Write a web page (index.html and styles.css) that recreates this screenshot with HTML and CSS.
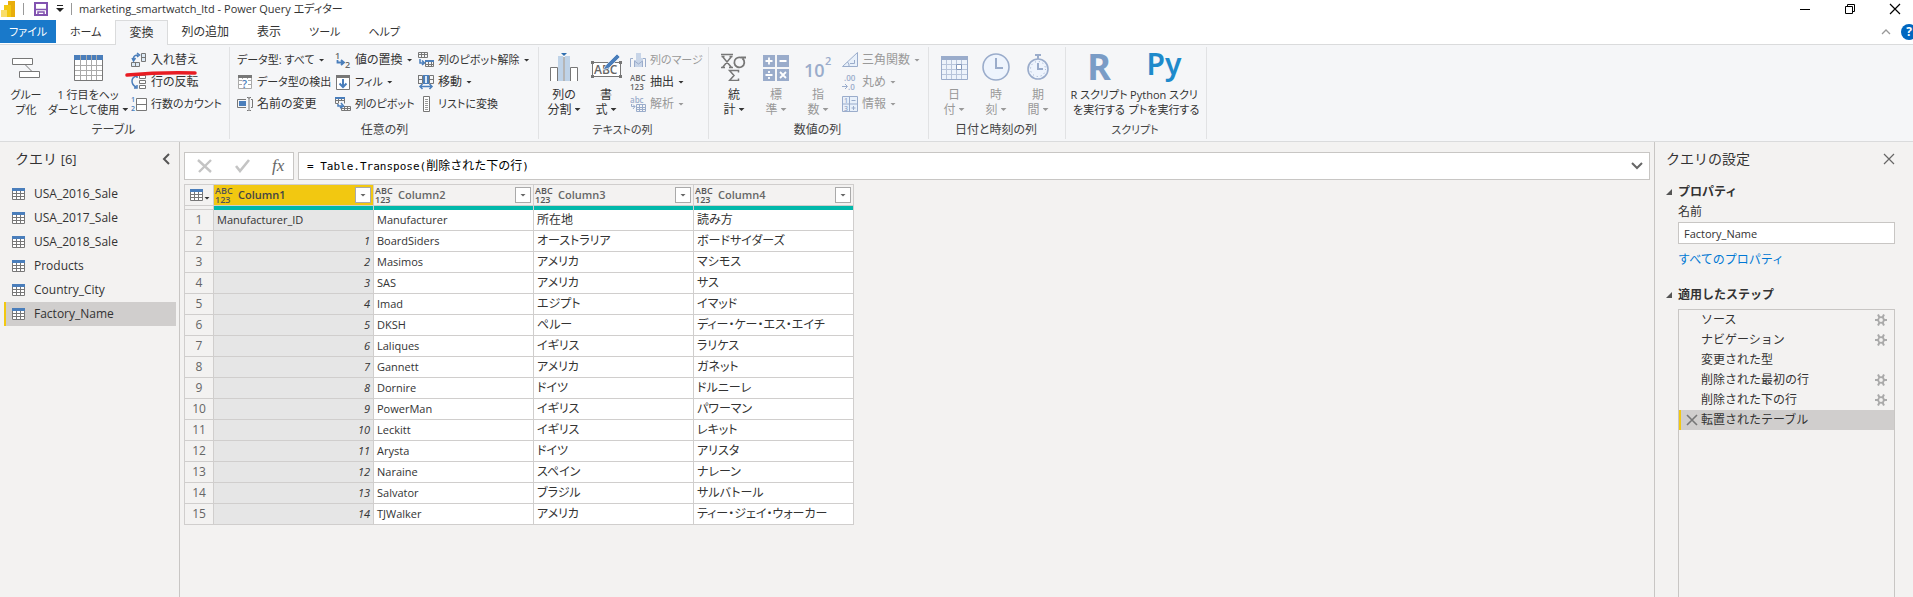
FILE: index.html
```html
<!DOCTYPE html>
<html lang="ja">
<head>
<meta charset="utf-8">
<title>marketing_smartwatch_ltd - Power Query エディター</title>
<link rel="stylesheet" href="styles.css">
</head>
<body>
<svg class="defs" aria-hidden="true">
  <symbol id="i-table" viewBox="0 0 13 12"><path fill="#fff" d="M0 0h13v12H0z"/><path d="M.5 3v8.500h12V3M4.500 3v8M8.500 3v8M1 5.500h11M1 8.500h11" fill="none" stroke="#777"/><path fill="#4a7ebb" d="M0 0h13v3H0z"/></symbol>
  <symbol id="i-gear" viewBox="0 0 12 12"><circle cx="6" cy="6" r="2.800" fill="none" stroke="#aaa" stroke-width="1.800"/><path d="M0 6h3M9 6h3M3 .5l1.500 3M9 .5l-1.500 3M3 11.500l1.500-3M9 11.500l-1.500-3" stroke="#aaa" stroke-width="2"/></symbol>
</svg>

<header class="titlebar">
  <svg class="logo" width="16" height="16" viewBox="0 0 16 16"><path fill="#e8ad0c" d="M8 0h7v16H8z"/><path fill="#f2c811" d="M4 4h7v12H4z"/><path fill="#f9dd6a" d="M1 9h6v7H1z"/></svg>
  <span class="tsep"></span>
  <button class="bare" aria-label="保存"><svg width="14" height="14" viewBox="0 0 14 14"><path d="M1 1h12v12H1z" fill="#fff" stroke="#8253b0" stroke-width="2"/><path d="M1 7.500h12" stroke="#8253b0" stroke-width="1.500"/><path d="M4 14v-4h6v4" fill="none" stroke="#8253b0" stroke-width="1.500"/></svg></button>
  <button class="bare qat" aria-label="クイック アクセス"><svg width="8" height="7" viewBox="0 0 8 7"><path d="M1 .5h6" stroke="#222"/><path d="M0 3h8L4 7z" fill="#222"/></svg></button>
  <span class="tsep"></span>
  <h1 class="title">marketing_smartwatch_ltd - Power Query エディター</h1>
  <div class="wincontrols">
    <button class="bare" aria-label="最小化"><svg width="12" height="12" viewBox="0 0 12 12"><path d="M1 6.500h10" stroke="#000"/></svg></button>
    <button class="bare" aria-label="元に戻す"><svg width="12" height="12" viewBox="0 0 12 12"><path d="M1.500 3.500h7v7h-7zM3.500 3V1.500h7v7H9" fill="none" stroke="#000"/></svg></button>
    <button class="bare" aria-label="閉じる"><svg width="12" height="12" viewBox="0 0 12 12"><path d="M1 1l10 10M11 1L1 11" stroke="#000" stroke-width="1.200"/></svg></button>
  </div>
</header>

<nav class="tabs">
  <button class="tab tight file">ファイル</button>
  <button class="tab tight">ホーム</button>
  <button class="tab active">変換</button>
  <button class="tab">列の追加</button>
  <button class="tab">表示</button>
  <button class="tab tight">ツール</button>
  <button class="tab tight">ヘルプ</button>
  <div class="tabtools">
    <button class="bare" aria-label="リボンを折りたたむ"><svg width="10" height="6" viewBox="0 0 10 6"><path d="M1 5l4-4 4 4" fill="none" stroke="#999" stroke-width="1.300"/></svg></button>
    <button class="help" aria-label="ヘルプを開く">?</button>
  </div>
</nav>

<div class="ribbon">
  <section class="group">
    <div class="items">
      <button class="big w44 tight"><svg width="28" height="28" viewBox="0 0 28 28"><path d="M.5 5.500h20v6H.5zM7.500 18.500h20v6h-20zM13.500 12l6 6" fill="#fff" stroke="#777"/></svg><span>グルー<br>プ化</span></button>
      <button class="big w80 tight"><svg width="29" height="28" viewBox="0 0 29 28"><path d="M.5 2.500h28v25H.5z" fill="#fff" stroke="#777"/><path d="M0 2h29v5H0z" fill="#4a7ebb"/><path d="M6.500 2v25M12.500 2v25M17.500 2v25M22.500 2v25M1 12.500h27M1 17.500h27M1 22.500h27" stroke="#aaa"/></svg><span>1 行目をヘッ<br>ダーとして使用<i class="arr"></i></span></button>
      <div class="stack c92">
        <button class="small"><svg width="16" height="16" viewBox="0 0 16 16"><path d="M10.500 1.500h4v8h-4zM10.500 5.500h4M.5 10.500h8v4h-8zM4.500 10.500v4" fill="#dce9f5" stroke="#777"/><path d="M2.500 8V6Q3 3 7 3M1 6l1.500 3L4.500 6M6 1l2.500 2L6 5" fill="none" stroke="#4a7ebb" stroke-width="1.500"/></svg>入れ替え</button>
        <button class="small"><svg width="16" height="16" viewBox="0 0 16 16"><path d="M8.500 1.500h6v3h-6zM8.500 6.500h6v3h-6zM8.500 11.500h6v3h-6z" fill="#fff" stroke="#777"/><path d="M6 2Q1 3 1 7t4 6M3 14h3v-3M3.500 1H6v3" fill="none" stroke="#4a7ebb" stroke-width="1.500"/></svg>行の反転</button>
        <button class="small tight"><svg width="16" height="16" viewBox="0 0 16 16"><path d="M5.500 2.500h10v12h-10zM5.500 8.500h10" fill="#fff" stroke="#777"/><text x="0" y="6" class="t7 blue">1</text><text x="0" y="15" class="t7 blue">2</text></svg>行数のカウント</button>
      </div>
      <svg class="mark" width="72" height="6" viewBox="0 0 72 6"><path d="M2 4Q36 1 70 2" fill="none" stroke="#e81c23" stroke-width="3.500" stroke-linecap="round"/></svg>
    </div>
    <h2 class="gname">テーブル</h2>
  </section>

  <section class="group wide">
    <div class="items">
      <div class="stack c98">
        <button class="small tight">データ型: すべて<i class="arr"></i></button>
        <button class="small tight"><svg width="16" height="16" viewBox="0 0 16 16"><path d="M1.500 1.500h13v13h-13zM5.500 3v11M10.500 3v11M1 6.500h13M1 10.500h13" fill="#fff" stroke="#aaa"/><path d="M1 1h14v3H1z" fill="#777"/><path fill="#fff" d="M5 5h6v9H5z"/><text x="5" y="14" class="t11 blue">?</text></svg>データ型の検出</button>
        <button class="small"><svg width="16" height="16" viewBox="0 0 16 16"><path d="M9 3.500H.5v8H9M14 3.500h1.500v8H14M10 1.500h1.500l.5 1 .5-1H14M10 14.500h1.500l.5-1 .5 1H14M12 2v11" fill="none" stroke="#777"/><path fill="#4a7ebb" d="M2 5h7v5H2z"/></svg>名前の変更</button>
      </div>
      <div class="stack c83">
        <button class="small"><svg width="16" height="16" viewBox="0 0 16 16"><text x="0" y="7" class="t9">1</text><text x="10" y="16" class="t9">2</text><path d="M2.500 8v2.500H8M6 8l3 2.500L6 13" fill="none" stroke="#4a7ebb" stroke-width="1.800"/></svg>値の置換<i class="arr"></i></button>
        <button class="small tight"><svg width="16" height="16" viewBox="0 0 16 16"><path d="M1.500 1.500h13v14h-13z" fill="#fff" stroke="#777"/><path d="M1 1h14v3H1z" fill="#777"/><path d="M8 5v8M4.500 9.500L8 13l3.500-3.500" fill="none" stroke="#4a7ebb" stroke-width="2"/></svg>フィル<i class="arr"></i></button>
        <button class="small tight"><svg width="16" height="16" viewBox="0 0 16 16"><path d="M.5 1.500h9v6M.5 1.500v6h3M3.500 2v5M6.500 2v3M1 4.500h8M6.500 10.500h9v4h-9zM9.500 11v3M12.500 11v3M7 12.500h8" fill="none" stroke="#777"/><path d="M0 1h10v2H0z" fill="#4a7ebb"/><path d="M3 8v2h4M6 7l2.500 3L5 12" fill="none" stroke="#4a7ebb" stroke-width="1.500"/></svg>列のピボット</button>
      </div>
      <div class="stack c114">
        <button class="small tight"><svg width="16" height="16" viewBox="0 0 16 16"><path d="M.5.500h9v5h-9zM3.500 1v4M6.500 1v4M1 2.500h8M7.500 8.500h8v6h-8zM10.500 9v5M13.500 9v5M8 12.500h7" fill="none" stroke="#777"/><path d="M7 8h9v2H7z" fill="#4a7ebb"/><path d="M2 7v4h4M4 8.500L6.500 11 4 13" fill="none" stroke="#4a7ebb" stroke-width="1.500"/></svg>列のピボット解除<i class="arr"></i></button>
        <button class="small"><svg width="16" height="16" viewBox="0 0 16 16"><path d="M.5 1v9M.5 1.500h4v8h-4zM1 5.500h3M11.500 1.500h4v8h-4zM12 5.500h3" fill="none" stroke="#777"/><path d="M5 1h6v9H5z" fill="#4a7ebb"/><path d="M8 2v7" stroke="#dce9f5" stroke-width="2"/><path d="M2 12.500h12M4.500 10L2 12.500 4.500 15M11.500 10l2.500 2.500-2.500 2.500" fill="none" stroke="#4a7ebb" stroke-width="1.500"/></svg>移動<i class="arr"></i></button>
        <button class="small tight"><svg width="16" height="16" viewBox="0 0 16 16"><path d="M5.500.500h6v15h-6z" fill="#fff" stroke="#777"/><path d="M7 3.500h3M7 5.500h3M7 7.500h3M7 9.500h3M7 11.500h3M7 13.500h3" stroke="#999"/></svg>リストに変換</button>
      </div>
    </div>
    <h2 class="gname">任意の列</h2>
  </section>

  <section class="group">
    <div class="items">
      <button class="big w42"><svg width="28" height="28" viewBox="0 0 28 28"><path d="M7.500 28V14.500h-7V28M20.500 28V14.500h7V28" fill="#fff" stroke="#777"/><path d="M8 3h5v25H8zM15 3h5v25h-5z" fill="#bfd3e8"/><path d="M11 0h6l-3 3z" fill="#2f6eaf"/><path d="M14 4v24" stroke="#777"/></svg><span>列の<br>分割<i class="arr"></i></span></button>
      <button class="big w42"><svg width="32" height="28" viewBox="0 0 32 28"><path d="M2.500 9.500h28v14h-28z" fill="#fff" stroke="#777"/><path d="M1 8h3v3H1zM29 8h3v3h-3zM1 22h3v3H1zM29 22h3v3h-3z" fill="#777"/><text x="4" y="21" class="t12">ABC</text><path d="M13 17l3-5L27 1l3 3-11 11z" fill="#4a7ebb" stroke="#fff" stroke-width=".6"/></svg><span>書<br>式<i class="arr"></i></span></button>
      <div class="stack c74">
        <button class="small tight off" disabled><svg width="16" height="16" viewBox="0 0 16 16"><path d="M3 6.500H.5V15M13 6.500h2.500V15" fill="none" stroke="#9aaccb"/><path d="M6 1h5v5h2v9H4V8h2z" fill="#c8d5e8"/><path d="M4.500 15V9l4 3 4-3v6" fill="none" stroke="#9aaccb"/></svg>列のマージ</button>
        <button class="small"><svg width="16" height="16" viewBox="0 0 16 16"><text x="0" y="7" class="t8">ABC</text><text x="0" y="16" class="t8">123</text></svg>抽出<i class="arr"></i></button>
        <button class="small off" disabled><svg width="16" height="16" viewBox="0 0 16 16"><text x="0" y="7" class="t8 pale">abc</text><path d="M6.500 8.500h9v7h-9zM9.500 8v7M12.500 8v7M6 11.500h9M6 13.500h9M1.500 8v2.500H5M3 8.500L5 10.500 3 13" fill="none" stroke="#9aaccb"/></svg>解析<i class="arr"></i></button>
      </div>
    </div>
    <h2 class="gname tight">テキストの列</h2>
  </section>

  <section class="group">
    <div class="items">
      <button class="big w42"><svg width="28" height="28" viewBox="0 0 28 28"><path d="M1 1.500h12" stroke="#777" stroke-width="1.500"/><path d="M2.500 3.500l9 11M11.500 3.500l-9 11M1 14.500h4M9 14.500h4M1.500 3.500h3M9.500 3.500h3" stroke="#777" stroke-width="1.500"/><path d="M26 4.500h-5.500a5 5 0 1 0 2 1" fill="none" stroke="#777" stroke-width="1.800"/><path d="M18.500 19.500v-2h-9l4.500 5-4.500 5h9v-2" fill="none" stroke="#777" stroke-width="1.500"/></svg><span>統<br>計<i class="arr"></i></span></button>
      <button class="big w42 off" disabled><svg width="26" height="28" viewBox="0 0 26 28"><path d="M0 2h12v12H0zM14 2h12v12H14zM0 16h12v12H0zM14 16h12v12H14z" fill="#9aaccb"/><path d="M2.500 8h7M6 4.500v7M16.500 8h7M2.500 22h7M6 18v2M6 24v2M17 19l6 6M23 19l-6 6" stroke="#fff" stroke-width="1.800"/></svg><span>標<br>準<i class="arr"></i></span></button>
      <button class="big w42 off" disabled><svg width="28" height="28" viewBox="0 0 28 28"><text x="0" y="24" class="t18">10</text><text x="21" y="12" class="t11 pale">2</text></svg><span>指<br>数<i class="arr"></i></span></button>
      <div class="stack c80">
        <button class="small off" disabled><svg width="16" height="16" viewBox="0 0 16 16"><path d="M15.500.500v14H.5zM12.500 8v3.500H8M5.500 10q2 2 1.500 4" fill="#e8f0fa" stroke="#9aaccb"/></svg>三角関数<i class="arr"></i></button>
        <button class="small off" disabled><svg width="16" height="16" viewBox="0 0 16 16"><text x="2" y="7" class="t8 pale">.00</text><text x="6" y="16" class="t8 pale">.0</text><path d="M0 12.500h5M3 10l2.500 2.500L3 15" fill="none" stroke="#9aaccb"/></svg>丸め<i class="arr"></i></button>
        <button class="small off" disabled><svg width="16" height="16" viewBox="0 0 16 16"><path d="M.5.500h15v15H.5zM7.500 0v16M0 8h16" fill="#e8f0fa" stroke="#9aaccb"/><text x="2" y="7" class="t7 pale">1</text><text x="2" y="15" class="t7 pale">3</text><path d="M9.500 4.500h4M9.500 12h4M11.500 10v4" stroke="#9aaccb"/></svg>情報<i class="arr"></i></button>
      </div>
    </div>
    <h2 class="gname">数値の列</h2>
  </section>

  <section class="group">
    <div class="items">
      <button class="big w42 off" disabled><svg width="27" height="28" viewBox="0 0 27 28"><path d="M.5 3.500h26v23H.5z" fill="#edf3fb" stroke="#9aaccb"/><path d="M0 3h27v4H0z" fill="#9aaccb"/><path d="M5.500 7v19M10.500 7v19M15.500 7v19M20.500 7v19M1 11.500h25M1 16.500h25M1 21.500h25" stroke="#b8c5db"/><path d="M15.500 11.500h5v5h-5z" fill="#fff" stroke="#8297ba"/></svg><span>日<br>付<i class="arr"></i></span></button>
      <button class="big w42 off" disabled><svg width="28" height="28" viewBox="0 0 28 28"><circle cx="14" cy="14" r="13" fill="#eef4fd" stroke="#9aaccb" stroke-width="1.600"/><path d="M14 5v10h7" fill="none" stroke="#9aaccb" stroke-width="2"/></svg><span>時<br>刻<i class="arr"></i></span></button>
      <button class="big w42 off" disabled><svg width="24" height="28" viewBox="0 0 24 28"><circle cx="12" cy="16" r="10" fill="#eef4fd" stroke="#9aaccb" stroke-width="1.600"/><circle cx="12" cy="16" r="7.500" fill="none" stroke="#9aaccb" stroke-dasharray="1 3"/><path d="M9 2h6M12 2v4M12 10v6h5" fill="none" stroke="#9aaccb" stroke-width="2"/></svg><span>期<br>間<i class="arr"></i></span></button>
    </div>
    <h2 class="gname">日付と時刻の列</h2>
  </section>

  <section class="group">
    <div class="items">
      <button class="big w58 tight"><b class="glyph r">R</b><span>R スクリプト<br>を実行する</span></button>
      <button class="big w72 tight"><b class="glyph py">Py</b><span>Python スクリ<br>プトを実行する</span></button>
    </div>
    <h2 class="gname tight">スクリプト</h2>
  </section>
</div>

<main class="workspace">
  <aside class="queries">
    <div class="qhead"><h2>クエリ <small>[6]</small></h2><button class="bare" aria-label="折りたたむ"><svg width="8" height="12" viewBox="0 0 8 12"><path d="M7 1L2 6l5 5" fill="none" stroke="#555" stroke-width="2"/></svg></button></div>
    <ul class="qlist">
      <li><button class="query"><svg width="13" height="12"><use href="#i-table"/></svg>USA_2016_Sale</button></li>
      <li><button class="query"><svg width="13" height="12"><use href="#i-table"/></svg>USA_2017_Sale</button></li>
      <li><button class="query"><svg width="13" height="12"><use href="#i-table"/></svg>USA_2018_Sale</button></li>
      <li><button class="query"><svg width="13" height="12"><use href="#i-table"/></svg>Products</button></li>
      <li><button class="query"><svg width="13" height="12"><use href="#i-table"/></svg>Country_City</button></li>
      <li><button class="query selected"><svg width="13" height="12"><use href="#i-table"/></svg>Factory_Name</button></li>
    </ul>
  </aside>

  <section class="center">
    <div class="formula">
      <div class="ftools">
        <button class="bare" aria-label="キャンセル"><svg width="16" height="14" viewBox="0 0 16 14"><path d="M1 1l13 12M14 1L2 13" stroke="#c4c4c4" stroke-width="2.400"/></svg></button>
        <button class="bare" aria-label="確定"><svg width="15" height="14" viewBox="0 0 15 14"><path d="M1 7l4 5 9-11" fill="none" stroke="#c4c4c4" stroke-width="2.600"/></svg></button>
        <button class="bare fx" aria-label="ステップの追加">fx</button>
      </div>
      <div class="fbox">
        <div class="ftext" role="textbox" contenteditable="true" spellcheck="false" aria-label="数式">= Table.Transpose(<span>削除された下の行</span>)</div>
        <button class="bare" aria-label="数式バーを展開"><svg width="12" height="8" viewBox="0 0 12 8"><path d="M1 1l5 5 5-5" fill="none" stroke="#666" stroke-width="2"/></svg></button>
      </div>
    </div>

    <table class="grid">
      <thead>
        <tr class="heads">
          <th class="corner"><button class="bare" aria-label="テーブル メニュー"><svg width="13" height="12"><use href="#i-table"/></svg><i class="arr"></i></button></th>
          <th class="picked"><div class="head"><span class="type">ABC<br>123</span><span class="cname">Column1</span><button class="filter" aria-label="Column1 の絞り込み"><i class="arr"></i></button></div></th>
          <th><div class="head"><span class="type">ABC<br>123</span><span class="cname">Column2</span><button class="filter" aria-label="Column2 の絞り込み"><i class="arr"></i></button></div></th>
          <th><div class="head"><span class="type">ABC<br>123</span><span class="cname">Column3</span><button class="filter" aria-label="Column3 の絞り込み"><i class="arr"></i></button></div></th>
          <th><div class="head"><span class="type">ABC<br>123</span><span class="cname">Column4</span><button class="filter" aria-label="Column4 の絞り込み"><i class="arr"></i></button></div></th>
        </tr>
        <tr class="quality"><td></td><td></td><td></td><td></td><td></td></tr>
      </thead>
      <tbody>
        <tr><th>1</th><td>Manufacturer_ID</td><td>Manufacturer</td><td>所在地</td><td>読み方</td></tr>
        <tr><th>2</th><td class="n">1</td><td>BoardSiders</td><td>オーストラリア</td><td>ボードサイダーズ</td></tr>
        <tr><th>3</th><td class="n">2</td><td>Masimos</td><td>アメリカ</td><td>マシモス</td></tr>
        <tr><th>4</th><td class="n">3</td><td>SAS</td><td>アメリカ</td><td>サス</td></tr>
        <tr><th>5</th><td class="n">4</td><td>Imad</td><td>エジプト</td><td>イマッド</td></tr>
        <tr><th>6</th><td class="n">5</td><td>DKSH</td><td>ペルー</td><td>ディー・ケー・エス・エイチ</td></tr>
        <tr><th>7</th><td class="n">6</td><td>Laliques</td><td>イギリス</td><td>ラリケス</td></tr>
        <tr><th>8</th><td class="n">7</td><td>Gannett</td><td>アメリカ</td><td>ガネット</td></tr>
        <tr><th>9</th><td class="n">8</td><td>Dornire</td><td>ドイツ</td><td>ドルニーレ</td></tr>
        <tr><th>10</th><td class="n">9</td><td>PowerMan</td><td>イギリス</td><td>パワーマン</td></tr>
        <tr><th>11</th><td class="n">10</td><td>Leckitt</td><td>イギリス</td><td>レキット</td></tr>
        <tr><th>12</th><td class="n">11</td><td>Arysta</td><td>ドイツ</td><td>アリスタ</td></tr>
        <tr><th>13</th><td class="n">12</td><td>Naraine</td><td>スペイン</td><td>ナレーン</td></tr>
        <tr><th>14</th><td class="n">13</td><td>Salvator</td><td>ブラジル</td><td>サルバトール</td></tr>
        <tr><th>15</th><td class="n">14</td><td>TJWalker</td><td>アメリカ</td><td>ティー・ジェイ・ウォーカー</td></tr>
      </tbody>
    </table>
  </section>

  <aside class="settings">
    <div class="shead"><h2>クエリの設定</h2><button class="bare" aria-label="閉じる"><svg width="12" height="12" viewBox="0 0 12 12"><path d="M1 1l10 10M11 1L1 11" stroke="#666" stroke-width="1.200"/></svg></button></div>
    <h3 class="sect"><svg width="6" height="6" viewBox="0 0 6 6"><path d="M6 0v6H0z" fill="#555"/></svg>プロパティ</h3>
    <div class="props">
      <label for="qname">名前</label>
      <input id="qname" type="text" value="Factory_Name">
      <a href="#">すべてのプロパティ</a>
    </div>
    <h3 class="sect"><svg width="6" height="6" viewBox="0 0 6 6"><path d="M6 0v6H0z" fill="#555"/></svg>適用したステップ</h3>
    <ul class="steps">
      <li><span>ソース</span><button class="bare" aria-label="設定の編集"><svg width="12" height="12"><use href="#i-gear"/></svg></button></li>
      <li><span>ナビゲーション</span><button class="bare" aria-label="設定の編集"><svg width="12" height="12"><use href="#i-gear"/></svg></button></li>
      <li><span>変更された型</span></li>
      <li><span>削除された最初の行</span><button class="bare" aria-label="設定の編集"><svg width="12" height="12"><use href="#i-gear"/></svg></button></li>
      <li><span>削除された下の行</span><button class="bare" aria-label="設定の編集"><svg width="12" height="12"><use href="#i-gear"/></svg></button></li>
      <li class="selected"><button class="bare" aria-label="ステップの削除"><svg width="12" height="12" viewBox="0 0 12 12"><path d="M1 1l10 10M11 1L1 11" stroke="#777" stroke-width="1.600"/></svg></button><span>転置されたテーブル</span></li>
    </ul>
  </aside>
</main>
</body>
</html>
```
FILE: styles.css
```css
* { box-sizing: border-box; }

body {
  margin: 0;
  min-height: 100vh;
  display: flex;
  flex-direction: column;
  background: #f3f2f1;
  color: #333;
  font: 12px/16px "Open Sans", "Noto Sans CJK JP", sans-serif;
}

h1, h2, h3, ul { margin: 0; padding: 0; font-weight: normal; font-size: 12px; }
ul { list-style: none; }
svg { display: block; flex: none; }
button { font: inherit; color: inherit; border: 0; background: none; padding: 0; }
.defs { position: absolute; width: 0; height: 0; }
.bare { display: flex; align-items: center; }

/* Labels that are mostly kana */
.tight { font-size: 11px; }

.arr {
  display: inline-block;
  flex: none;
  width: 6px;
  height: 3px;
  margin-left: 4px;
  vertical-align: 3px;
  background: currentColor;
  clip-path: polygon(0 0, 100% 0, 50% 100%);
}

/* Title bar */
.titlebar {
  display: flex;
  align-items: center;
  height: 20px;
  padding: 0 12px 3px 0;
  background: #fff;
}
.tsep { width: 1px; height: 12px; margin: 0 10px 0 7px; background: #999; }
.tsep + .title { margin-left: -3px; }
.qat { margin-left: 8px; }
.title { font-feature-settings: "palt"; font-size: 11px; white-space: nowrap; }
.wincontrols { margin-left: auto; display: flex; gap: 33px; }

/* Tabs */
.tabs {
  display: flex;
  height: 25px;
  background: #fff;
  border-bottom: 1px solid #dadbdc;
  font-feature-settings: "palt";
}
.tab { padding: 0 14px; height: 24px; border: 0 solid #dadbdc; white-space: nowrap; }
.tab.file { width: 56px; height: 23px; background: #1979ca; color: #fff; padding: 0; }
.tab.active { height: 25px; border-width: 1px 1px 0; background: #f5f6f8; padding: 0 13px; }
.tabtools { margin-left: auto; display: flex; align-items: center; gap: 10px; overflow: hidden; }
.help {
  width: 16px;
  height: 16px;
  margin-right: -4px;
  border-radius: 50%;
  background: #0067c0;
  color: #fff;
  font-weight: bold;
  line-height: 16px;
}

/* Ribbon */
.ribbon {
  display: flex;
  padding: 2px 0;
  background: #f5f6f8;
  border-bottom: 1px solid #dadbdc;
  font-feature-settings: "palt";
}
.group {
  display: flex;
  flex-direction: column;
  padding: 2px 6px 0 4px;
  border-right: 1px solid #e1e2e4;
}
.group.wide { padding-left: 7px; }
.items { position: relative; display: flex; height: 72px; }
.gname { text-align: center; line-height: 18px; color: #444; }
.big {
  display: flex;
  flex-direction: column;
  align-items: center;
  gap: 6px;
  padding-top: 4px;
  line-height: 15px;
  white-space: nowrap;
}
.big .arr { margin-left: 3px; }
.w42 { width: 42px; }
.w44 { width: 44px; }
.w58 { width: 58px; }
.w72 { width: 72px; }
.w80 { width: 80px; }
.stack { display: flex; flex-direction: column; }
.big + .stack { margin-left: 3px; }
.c74 { width: 72px; }
.c80 { width: 80px; }
.c83 { width: 83px; }
.c92 { width: 92px; }
.c98 { width: 98px; }
.c114 { width: 114px; }
.small { display: flex; align-items: center; gap: 4px; height: 22px; white-space: nowrap; }
.small .arr { margin-left: 0; }
.off { color: #999; }
.mark { position: absolute; left: 121px; top: 22px; }
.glyph { height: 28px; font-family: "Noto Sans", sans-serif; }
.r { font-size: 36px; line-height: 28px; color: #7a9cc6; }
.py { font-size: 30px; line-height: 22px; color: #1e8acb; font-weight: 600; }

svg text { font-family: "Open Sans", sans-serif; font-weight: 600; fill: #666; }
.t7 { font-size: 7px; }
.t8 { font-size: 8px; }
.t9 { font-size: 9px; }
.t11 { font-size: 11px; }
.t12 { font-size: 12px; }
.t18 { font-size: 18px; }
svg .blue { fill: #4a7ebb; }
svg .pale, svg .t18 { fill: #9aaccb; }

/* Workspace */
.workspace { flex: 1; display: grid; grid-template-columns: 180px 1fr 259px; }

.queries { border-right: 1px solid #c8c6c4; padding: 6px 3px 0 4px; }
.qhead { display: flex; justify-content: space-between; align-items: center; padding: 0 6px 0 11px; height: 22px; }
.qhead h2, .shead h2 { font-size: 14px; }
.qhead small { font-size: 13px; }
.qlist { padding-top: 12px; }
.query {
  display: flex;
  align-items: center;
  gap: 9px;
  width: 100%;
  height: 24px;
  padding-left: 6px;
  border-left: 2px solid transparent;
}
.query.selected { background: #d0cecd; border-color: #f2c811; }

.center { padding: 10px 4px 0; min-width: 0; }
.formula { display: flex; gap: 4px; height: 28px; }
.ftools { display: flex; align-items: center; gap: 22px; width: 110px; padding-left: 12px; }
.ftools, .fbox { background: #fff; border: 1px solid #c8c6c4; }
.fx { font: italic 17px/20px "Liberation Serif", serif; color: #666; }
.fbox { flex: 1; display: flex; align-items: center; padding: 0 6px 0 8px; }
.ftext { flex: 1; font: 11px/18px "DejaVu Sans Mono", "Noto Sans CJK JP", monospace; color: #000; }
.ftext span { font-size: 12px; }

/* Data grid */
.grid {
  margin-top: 4px;
  border-spacing: 0;
  border: solid #d0cecd;
  border-width: 1px 0 0 1px;
  table-layout: fixed;
  width: 670px;
  font-feature-settings: "palt";
}
.grid td, .grid th { padding: 0; height: 21px; border: solid #d0cecd; border-width: 0 1px 1px 0; }
.grid .corner { width: 29px; }
.corner .bare { margin-left: 5px; }
.corner .arr { margin: 6px 0 0 1px; }
.head { display: flex; align-items: center; height: 20px; padding: 0 2px 0 1px; color: #666; }
.type { width: 18px; font-size: 9px; line-height: 9px; font-weight: 600; text-align: left; color: #555; }
.cname { flex: 1; padding-left: 5px; text-align: left; font-size: 11px; font-weight: 600; }
.picked { background: #f2c811; }
.picked .head { color: #444; }
.filter { display: flex; justify-content: center; align-items: center; width: 16px; height: 16px; border: 1px solid #aaa; background: #fff; color: #666; }
.filter .arr { margin: 0; }
.grid .quality td { height: 4px; border-bottom: 0; background: #01b8aa; }
.grid .quality td:first-child { background: #f3f2f1; border-bottom: 1px solid #d0cecd; }
.grid tbody th { font-weight: normal; color: #666; }
.grid tbody td { background: #fff; padding: 0 3px; font-size: 11px; line-height: 16px; }
.grid tbody td:nth-child(n+4) { font-size: 12px; }
.grid tbody td:nth-child(2) { background: #e6e6e6; }
.grid .n { text-align: right; font-style: italic; }

/* Query settings */
.settings { display: flex; flex-direction: column; border-left: 1px solid #c8c6c4; padding: 6px 18px 0 11px; }
.shead { display: flex; justify-content: space-between; align-items: center; height: 22px; }
.sect { display: flex; align-items: center; gap: 6px; margin-top: 14px; line-height: 16px; font-weight: bold; }
.props { display: flex; flex-direction: column; padding: 4px 0 5px 12px; }
.props input { height: 22px; margin: 2px 0 8px; padding: 0 5px; border: 1px solid #c8c6c4; background: #fff; font: inherit; color: #333; font-size: 11px; }
.props a { color: #0078d4; text-decoration: none; }
.steps { flex: 1; margin: 6px 0 0 12px; border: solid #c8c6c4; border-width: 1px 1px 0; }
.steps li { display: flex; align-items: center; height: 20px; padding: 0 7px 0 22px; }
.steps span { flex: 1; }
.steps .selected { padding-left: 5px; gap: 3px; border-left: 2px solid #f2c811; background: #d0cecd; }
```
